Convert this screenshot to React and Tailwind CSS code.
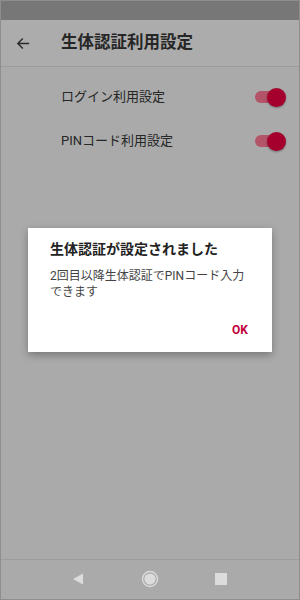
import React from "react";

const font = { fontFamily: 'Roboto, "Noto Sans CJK JP", sans-serif' };

function Toggle() {
  return (
    <div className="relative w-[34px] h-[20px] flex items-center">
      <div className="absolute left-[3px] right-[3px] h-[12px] rounded-full bg-[#b35468]" />
      <div className="absolute right-0 w-[19px] h-[19px] rounded-full bg-[#a5002d] shadow-[0_1px_2px_rgba(0,0,0,0.35)]" />
    </div>
  );
}

export default function App() {
  return (
    <div
      className="relative w-[300px] h-[600px] flex flex-col bg-[#aaaaaa] border border-[#8e8e8e] overflow-hidden"
      style={font}
    >
      <div className="h-[19px] bg-[#777777] shrink-0" />
      <div className="h-[47px] shrink-0 flex items-center border-b border-[#9c9c9c] bg-[#acacac]">
        <div className="w-[60px] flex items-center pl-[14px]">
          <svg width="17" height="17" viewBox="0 0 24 24" fill="none" stroke="#2a2a2a" strokeWidth="2">
            <path d="M20 12H4M11 5l-7 7 7 7" />
          </svg>
        </div>
        <div className="text-[16.5px] font-bold text-[#262626]">生体認証利用設定</div>
      </div>
      <div className="flex-1 flex flex-col pt-[8px]">
        <div className="h-[44px] flex items-center pl-[60px] pr-[13px] justify-between">
          <span className="text-[13px] text-[#262626]">ログイン利用設定</span>
          <Toggle />
        </div>
        <div className="h-[44px] flex items-center pl-[60px] pr-[13px] justify-between">
          <span className="text-[13px] text-[#262626]">PINコード利用設定</span>
          <Toggle />
        </div>
      </div>
      <div className="h-[40px] shrink-0 border-t border-[#9c9c9c] flex items-center justify-center gap-[56px] pb-[1px] pr-[3px]">
        <svg width="14" height="14" viewBox="0 0 14 14">
          <path d="M12 1.5V12.5L2 7Z" fill="#dcdcdc" />
        </svg>
        <svg width="18" height="18" viewBox="0 0 18 18">
          <circle cx="9" cy="9" r="7.5" fill="none" stroke="#dcdcdc" strokeWidth="1.3" />
          <circle cx="9" cy="9" r="5.6" fill="#dcdcdc" />
        </svg>
        <div className="w-[12px] h-[12px] bg-[#dcdcdc]" />
      </div>

      <div className="absolute left-[27px] top-[227px] w-[244px] h-[124px] bg-white shadow-[0_3px_8px_rgba(0,0,0,0.3)] flex flex-col pl-[22px] pr-[16px]">
        <div className="pt-[10px] text-[14px] font-bold leading-[22px] text-[#222]">生体認証が設定されました</div>
        <div className="pt-[8px] text-[12px] leading-[16px] text-[#444]">
          2回目以降生体認証でPINコード入力
          <br />
          できます
        </div>
        <div className="flex-1 flex items-end justify-end pb-[13px]">
          <span className="text-[12px] font-bold text-[#c2003a] pr-[8px]">OK</span>
        </div>
      </div>
    </div>
  );
}
